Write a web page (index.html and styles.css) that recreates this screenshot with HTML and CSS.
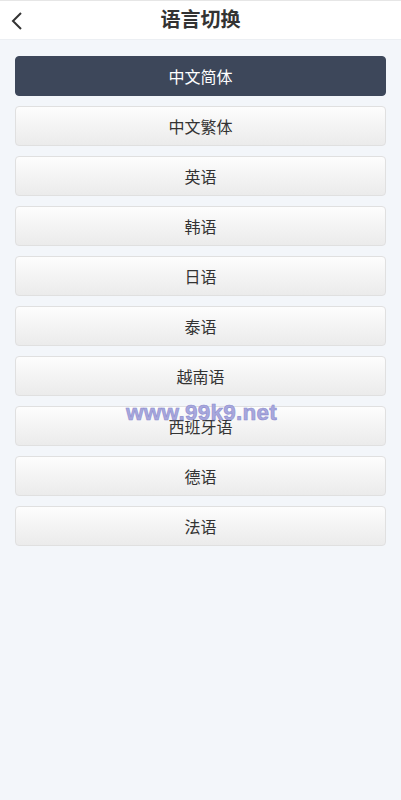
FILE: index.html
```html
<!DOCTYPE html>
<html lang="zh-CN">
<head>
<meta charset="utf-8">
<meta name="viewport" content="width=device-width, initial-scale=1">
<title>语言切换</title>
<link rel="stylesheet" href="styles.css">
</head>
<body>
<header class="topbar">
  <a class="back" href="#" aria-label="返回">
    <svg width="14" height="20" viewBox="0 0 14 20"><path d="M11 2 L3 10 L11 18" fill="none" stroke="#333" stroke-width="2"/></svg>
  </a>
  <h1 class="title">语言切换</h1>
</header>
<main class="list">
  <div class="lang active">中文简体</div>
  <div class="lang">中文繁体</div>
  <div class="lang">英语</div>
  <div class="lang">韩语</div>
  <div class="lang">日语</div>
  <div class="lang">泰语</div>
  <div class="lang">越南语</div>
  <div class="lang">西班牙语</div>
  <div class="lang">德语</div>
  <div class="lang">法语</div>
</main>
<div class="watermark">www.99k9.net</div>
</body>
</html>
```
FILE: styles.css
```css
html, body {
  margin: 0;
  padding: 0;
}
body {
  background: #f3f6fa;
  font-family: "Liberation Sans", "Noto Sans CJK SC", sans-serif;
  color: #333;
  min-height: 800px;
  position: relative;
}
.topbar {
  height: 40px;
  background: #fff;
  border-top: 1px solid #e6e6e6;
  border-bottom: 1px solid #eceff3;
  box-sizing: border-box;
  display: flex;
  align-items: center;
  justify-content: center;
  position: relative;
}
.back {
  position: absolute;
  left: 10px;
  top: 10px;
  display: flex;
}
.title {
  margin: 0;
  font-size: 20px;
  font-weight: bold;
  color: #333;
  line-height: 40px;
}
.list {
  padding: 16px 15px;
  display: flex;
  flex-direction: column;
  gap: 10px;
}
.lang {
  height: 40px;
  box-sizing: border-box;
  border: 1px solid #e0e0e0;
  border-radius: 4px;
  background: linear-gradient(#fdfdfd, #ebebeb);
  display: flex;
  align-items: center;
  justify-content: center;
  font-size: 16px;
  color: #333;
}
.lang.active {
  background: #3d475a;
  border-color: #3d475a;
  color: #fff;
}
.watermark {
  position: absolute;
  left: 126px;
  top: 400px;
  font-family: "Liberation Sans", sans-serif;
  font-weight: bold;
  font-size: 22.5px;
  letter-spacing: 0.25px;
  color: #a8a8dc;
  -webkit-text-stroke: 0.6px #8c8cd0;
}
```
